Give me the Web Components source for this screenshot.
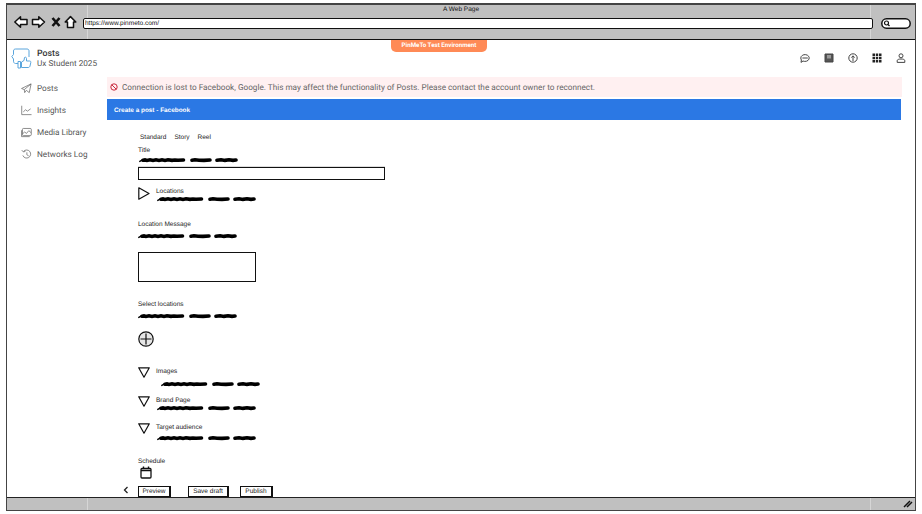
<!DOCTYPE html>
<html><head><meta charset="utf-8">
<style>
html,body{margin:0;padding:0;background:#fff;width:922px;height:514px;overflow:hidden;text-rendering:geometricPrecision}
</style></head>
<body>
<wire-window>
  <app-sidebar slot="side"></app-sidebar>
  <app-topbar slot="top"></app-topbar>
  <post-form></post-form>
</wire-window>
<script>
function def(name,css,html){
  customElements.define(name,class extends HTMLElement{
    constructor(){super();const r=this.attachShadow({mode:'open'});
      r.innerHTML='<style>'+css+'</style>'+(typeof html==='function'?html(this):html);}
  });
}
const SK='font-family:"Liberation Sans",Arial,sans-serif;';
const BAR='background:linear-gradient(#d6d6d6,#d6d6d6) 80px 0/1px 100% no-repeat,linear-gradient(#d6d6d6,#d6d6d6) 863px 0/1px 100% no-repeat,#c0c0c0;';
def('wire-window',`
:host{display:block;width:922px;height:514px;box-sizing:border-box;padding:3px 6px 3px 6px;${SK}}
.win{height:100%;box-sizing:border-box;border:1px solid #444;border-top-width:2px;background:#fff;display:flex;flex-direction:column;position:relative}
.chrome{${BAR}border-bottom:1px solid #111;flex:none}
.title{height:11px;text-align:center;font-size:6.5px;line-height:9px;color:#111}
.tool{height:23px;display:flex;align-items:flex-start;padding:0 0 0 7px}
.tool svg{display:block;flex:none;overflow:visible}
.url{flex:1;margin:2px 0 0 5px;height:11px;box-sizing:border-box;background:#fff;border:1.5px solid #111;border-radius:2px;font-size:6.5px;line-height:9px;padding-left:1px;color:#111}
.search{margin:2px 4px 0 8px}
.body{flex:1;min-height:0;background:#fff;position:relative;display:grid;grid-template-columns:100px 1fr;grid-template-rows:37px 1fr}
.side{grid-row:1/3;grid-column:1}
.status{height:13px;box-sizing:border-box;flex:none;${BAR}border-top:1px solid #222;display:flex;justify-content:flex-end;align-items:center;padding-right:2px;position:relative}
.badge{position:absolute;left:384px;top:0;width:96px;height:11.5px;background:#ff8a56;border-radius:0 0 5px 5px;color:#fff;font:700 6.2px/10px Roboto,sans-serif;text-align:center}
`,`<div class="win">
<div class="chrome">
<div class="title">A Web Page</div>
<div class="tool">
<svg width="64" height="12" viewBox="0 0 64 12" fill="#fff" stroke="#111" stroke-width="1.5" stroke-linejoin="round">
<path d="M.8 6 6.5 .8V3.5H13V8.5H6.5V11.2Z"/>
<path d="M30.5 6 24.8 .8V3.5H18.5V8.5H24.8V11.2Z"/>
<path d="M38.5 2 45.5 10M45.5 2 38.5 10" stroke-width="2.6" fill="none"/>
<path d="M51.2 6 56.5 .6 61.8 6H59.5V11.4H53.5V6Z"/>
</svg>
<div class="url">https://www.pinmeto.com/</div>
<svg class="search" width="30" height="11" viewBox="0 0 30 11" fill="#fff" stroke="#111" stroke-width="1.5"><rect x=".8" y=".8" width="28.4" height="9.4" rx="4.7"/><circle cx="5.5" cy="5" r="2" stroke-width="1.2"/><path d="M7 6.5 8.5 8" stroke-width="1.2"/></svg>
</div>
</div>
<div class="body">
<div class="side"><slot name="side"></slot></div>
<div><slot name="top"></slot></div>
<div style="min-width:0;min-height:0"><slot></slot></div>
<div class="badge">PinMeTo Test Environment</div>
</div>
<div class="status"><svg width="10" height="8" viewBox="0 0 10 8" fill="none" stroke="#111" stroke-width="1.5"><path d="M1 7 7 1M4 7 9 2"/></svg></div>
</div>`);

const sideIcons={
 send:'<path d="M.6 6 11 1 9 10.5 5.8 8 4 10.5 3.6 7.2ZM3.6 7.2 11 1"/>',
 chart:'<path d="M.8 .8V10.5H11.5M2.5 7.5 5 5.2l2 1.5L10.5 4.2"/>',
 media:'<rect x="1.6" y="1.6" width="9.6" height="7.8" rx="1"/><path d="M1.6 7.5 4 5.5l2 1.5L8.5 4 11 6.2M.6 3.5V10.5H9.5"/>',
 hist:'<path d="M2.8 2.6A4.4 4.4 0 1 1 2 7M.8 1.2 2.6 3.2 4.8 2.6M6.4 3.6V6.3L8.4 7.5"/>'
};
def('nav-item',`
:host{display:flex;align-items:center;height:22px;padding-left:14px;gap:5px;font:400 8.2px/11px Roboto,sans-serif;color:#555}
svg{width:11px;height:11px;flex:none;fill:none;stroke:#666;stroke-width:.8}
span{padding-top:2px}
`,el=>`<svg viewBox="0 0 12 12">${sideIcons[el.getAttribute('icon')]}</svg><span><slot></slot></span>`);
def('app-sidebar',`
:host{display:block;height:100%}
.brand{display:flex;height:37px;box-sizing:border-box;padding:8px 0 0 4px;gap:5px}
.brand svg{flex:none}
.names{margin-top:1px}
.t{font:500 8.8px/10px Roboto,sans-serif;color:#333}
.s{font:400 8.2px/10px Roboto,sans-serif;color:#555}
nav{display:flex;flex-direction:column}
`,`<div class="brand">
<svg width="21" height="21" viewBox="0 0 21 21" fill="none" stroke="#5aa5dc" stroke-width="1"><path d="M11 15.5H4.5C3 15.5 2.5 14 2.5 13V11L.8 8.5 2.5 6.5V3C2.5 1.5 3.5 1 4.5 1H16C17.5 1 18 2 18 3V9"/><path d="M7 13.5H9.5V20H7ZM10.5 14V19.5H17C18 19.5 18.8 19 19 18L19.8 14.5C20 13.5 19.5 13 18.5 13H15.5V10.5C15.5 9 14 9 13.5 9.5L13 12.5Z" fill="#fff"/></svg>
<div class="names"><div class="t">Posts</div><div class="s">Ux Student 2025</div></div></div>
<nav><nav-item icon="send">Posts</nav-item><nav-item icon="chart">Insights</nav-item><nav-item icon="media">Media Library</nav-item><nav-item icon="hist">Networks Log</nav-item></nav>`);

def('app-topbar',`
:host{display:flex;height:37px;justify-content:flex-end;align-items:flex-start;padding:13px 9px 0 0;box-sizing:border-box}
svg{display:block;width:10px;height:10px;margin-left:14px;fill:none;stroke:#444;stroke-width:1}
`,`<svg viewBox="0 0 10 10"><path d="M.8 5A4.2 3.4 0 1 1 3 8L1 9.4 1.4 7A4 4 0 0 1 .8 5ZM2.4 5H7.8"/></svg>
<svg viewBox="0 0 10 10"><path d="M1 1H9V9H1Z" fill="#555" stroke="#444"/><path d="M3 2V5.5H7V2" fill="#999" stroke="none"/></svg>
<svg viewBox="0 0 10 10"><circle cx="5" cy="5" r="4.2"/><path d="M3.4 4.6 5 2.8 6.6 4.6M5 3V8"/></svg>
<svg viewBox="0 0 10 10" style="stroke:none;fill:#222"><path d="M.5 .5H3V3H.5ZM3.8 .5H6.2V3H3.8ZM7 .5H9.5V3H7ZM.5 3.8H3V6.2H.5ZM3.8 3.8H6.2V6.2H3.8ZM7 3.8H9.5V6.2H7ZM.5 7H3V9.5H.5ZM3.8 7H6.2V9.5H3.8ZM7 7H9.5V9.5H7Z"/></svg>
<svg viewBox="0 0 10 10"><circle cx="5" cy="2.8" r="2"/><path d="M1.2 9.4V7.6C1.2 6.5 3 6 5 6S8.8 6.5 8.8 7.6V9.4Z"/></svg>`);

def('wire-scribble',`
:host{display:block;width:99px;height:6px}
svg{display:block}
`,`<svg width="99" height="6" viewBox="0 0 99 6" fill="none" stroke="#000" stroke-linecap="round">
<path stroke-width="1.4" d="M.8 4.4 3 3.2"/>
<path stroke-width="3.6" d="M4 3.2 6 2.9 8 3.4 11 2.8 14 3.4 17 2.8 20 3.4 23 2.8 26 3.4 29 2.8 33 3.4 36 3 39 3.2 44.5 3M53 3.2 56 2.8 60 3.2 65 3.4 71 3M78 3.2 82 2.7 86 3.4 90 2.8 94 3.4 97 3"/></svg>`);
def('wire-label',`:host{display:block;padding-top:1px;margin-bottom:-1px;font:400 6.5px/8px "Liberation Sans",Arial,sans-serif;color:#222}`,`<slot></slot>`);
def('wire-btn',`
:host{display:inline-block;box-sizing:border-box;height:12px;border:1px solid #111;border-right-width:2px;border-bottom-width:2px;background:#fff;font:400 6.5px/10px "Liberation Sans",Arial,sans-serif;color:#222;text-align:center}
`,`<slot></slot>`);
def('wire-section',`
:host{display:flex;gap:6px;align-items:flex-start}
svg{flex:none;display:block}
.c{display:flex;flex-direction:column}
wire-scribble{margin:var(--sm,1px) 0 0 var(--sl,1px)}
`,el=>{const right=el.hasAttribute('open-right');
return (right?`<svg width="12" height="13" viewBox="0 0 12 13" fill="#fff" stroke="#111" stroke-width="1.2"><path d="M.8 .8 11 6.5 .8 12.2Z" stroke-linejoin="round"/></svg>`
:`<svg width="12" height="11" viewBox="0 0 12 11" fill="#fff" stroke="#111" stroke-width="1.2"><path d="M.7 .8H11.3L6 10.2Z" stroke-linejoin="round"/></svg>`)+`<div class="c"><wire-label>${el.getAttribute('label')}</wire-label><wire-scribble></wire-scribble></div>`});

def('post-form',`
:host{display:flex;flex-direction:column;height:100%;box-sizing:border-box;padding-right:13px;position:relative}
.alert{height:20px;background:#fff0f1;display:flex;align-items:center;padding-left:3px;gap:4px;font:400 8.2px/11px Roboto,sans-serif;color:#666;flex:none;white-space:nowrap}
.alert svg{flex:none}
.alert span{padding-top:2px}
.head{height:21px;margin:2px 1px 0 0;background:#2b78e4;color:#fff;font:700 6.4px/23px "Liberation Sans",Arial,sans-serif;padding-left:7px;flex:none;overflow:hidden}
.f{flex:1;display:flex;flex-direction:column;align-items:flex-start;padding-left:31px;position:relative}
.tabs{display:flex;gap:8px;margin:14px 0 0 2px;font:400 6.5px/8px "Liberation Sans",Arial,sans-serif;color:#222}
.in{width:247px;height:13px;box-sizing:border-box;border:1.2px solid #111;background:#fff;margin-top:4px;box-shadow:0 -1px 0 #ddd;flex:none}
.ta{width:118px;height:30px;box-sizing:border-box;border:1.2px solid #111;background:#fff;margin-top:13px;flex:none}
.back{position:absolute;left:16px;top:366px}
.btns{display:flex;margin-top:7px;flex:none}
`,`<div class="alert"><svg width="8" height="8" viewBox="0 0 8 8" fill="none" stroke="#c8283c" stroke-width="1"><circle cx="4" cy="4" r="3.2"/><path d="M1.8 1.8 6.2 6.2"/></svg><span>Connection is lost to Facebook, Google. This may affect the functionality of Posts. Please contact the account owner to reconnect.</span></div>
<div class="head">Create a post - Facebook</div>
<div class="f">
<div class="tabs"><span>Standard</span><span>Story</span><span>Reel</span></div>
<wire-label style="margin-top:4px">Title</wire-label>
<wire-scribble style="margin:3px 0 0 1px"></wire-scribble>
<div class="in"></div>
<wire-section open-right label="Locations" style="margin-top:7px"></wire-section>
<wire-label style="margin-top:18px">Location Message</wire-label>
<wire-scribble style="margin-top:5px"></wire-scribble>
<div class="ta"></div>
<wire-label style="margin-top:18px">Select locations</wire-label>
<wire-scribble style="margin-top:5px"></wire-scribble>
<svg width="16" height="16" viewBox="0 0 16 16" fill="#e6e6e6" stroke="#111" stroke-width="1.2" style="display:block;margin-top:12px;flex:none"><circle cx="8" cy="8" r="7.2"/><path d="M8 2.5V13.5M2.5 8H13.5" fill="none"/></svg>
<wire-section label="Images" style="margin-top:20px;--sl:5px;--sm:6px"></wire-section>
<wire-section label="Brand Page" style="margin-top:9px"></wire-section>
<wire-section label="Target audience" style="margin-top:12px;--sm:4px"></wire-section>
<wire-label style="margin-top:16px">Schedule</wire-label>
<svg width="12" height="13" viewBox="0 0 12 13" fill="none" stroke="#111" stroke-width="1.3" style="display:block;margin:1px 0 0 2px;flex:none"><rect x="1" y="2.5" width="10" height="9.5" rx="1"/><path d="M1 4.5H11M3.5 .5V2.5M8.5 .5V2.5" stroke-width="1.4"/></svg>
<div class="btns"><wire-btn style="width:33px">Preview</wire-btn><wire-btn style="width:41px;margin-left:17px">Save draft</wire-btn><wire-btn style="width:33px;margin-left:11px">Publish</wire-btn></div>
<svg class="back" width="6" height="8" viewBox="0 0 6 8" fill="none" stroke="#222" stroke-width="1.3"><path d="M4.5 1 1.5 4 4.5 7"/></svg>
</div>`);
</script>
</body></html>
